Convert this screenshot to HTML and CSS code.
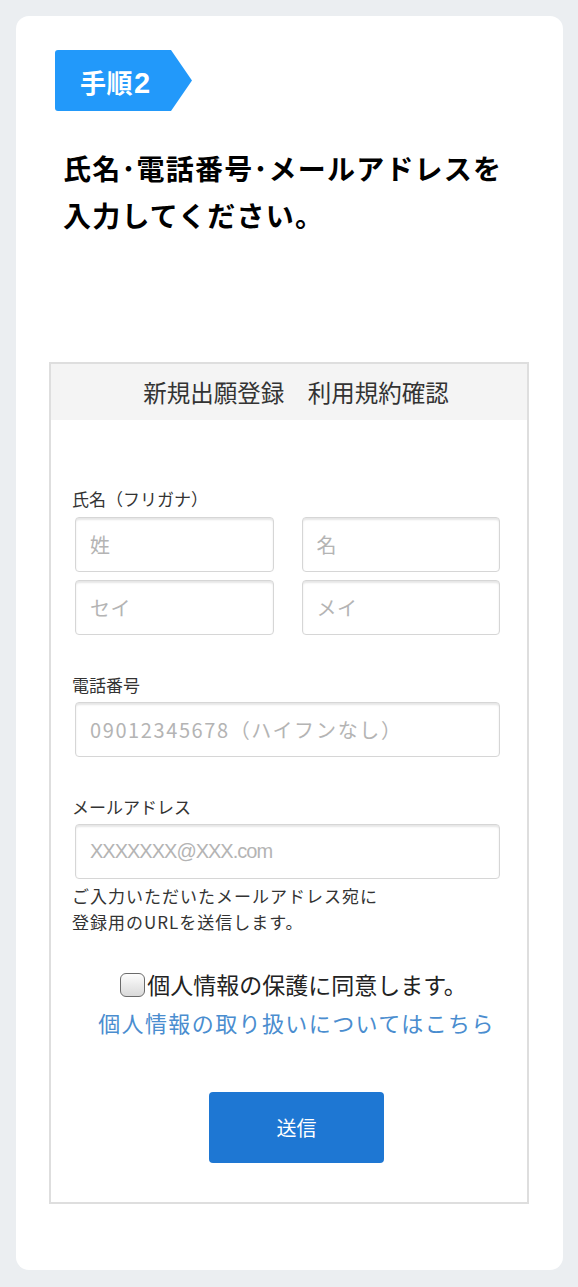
FILE: index.html
```html
<!DOCTYPE html>
<html lang="ja">
<head>
<meta charset="utf-8">
<title>手順2</title>
<link rel="stylesheet" href="styles.css">
</head>
<body>
<div class="card">
  <div class="step-badge"><span class="step-label">手順<span class="step-num">2</span></span></div>
  <h1 class="step-title">氏名･電話番号･メールアドレスを<br>入力してください。</h1>

  <div class="form-box">
    <div class="form-header">新規出願登録　利用規約確認</div>
    <div class="form-body">
      <div class="field-label first">氏名（フリガナ）</div>
      <div class="name-grid">
        <input class="text-input" type="text" placeholder="姓">
        <input class="text-input" type="text" placeholder="名">
        <input class="text-input" type="text" placeholder="セイ">
        <input class="text-input" type="text" placeholder="メイ">
      </div>

      <div class="field-label">電話番号</div>
      <div class="single-row">
        <input class="text-input tel" type="text" placeholder="09012345678（ハイフンなし）">
      </div>

      <div class="field-label">メールアドレス</div>
      <div class="single-row">
        <input class="text-input latin" type="text" placeholder="XXXXXXX@XXX.com">
      </div>
      <p class="field-note">ご入力いただいたメールアドレス宛に<br>登録用のURLを送信します。</p>

      <div class="agree">
        <label class="agree-line"><input class="agree-check" type="checkbox">個人情報の保護に同意します。</label>
        <a class="agree-link" href="#">個人情報の取り扱いについてはこちら</a>
        <button class="submit-btn" type="button">送信</button>
      </div>
    </div>
  </div>
</div>
</body>
</html>
```

FILE: styles.css
```css
html, body {
  margin: 0;
  padding: 0;
}

body {
  background: #ebeef1;
  font-family: "Noto Sans CJK JP", sans-serif;
  color: #333;
  padding: 16px 15px 16px 16px;
}

.card {
  background: #fff;
  border-radius: 13px;
  padding: 34px 34px 66px 33px;
  display: flex;
  flex-direction: column;
}

.step-badge {
  margin-left: 6px;
  width: 137px;
  height: 61px;
  background: #2299fa;
  clip-path: polygon(0 0, 116px 0, 137px 50%, 116px 100%, 0 100%);
  border-radius: 3px 0 0 3px;
  display: flex;
  align-items: center;
}

.step-label {
  color: #fff;
  font-weight: 700;
  font-size: 26px;
  line-height: 1;
  padding-left: 25px;
  padding-top: 6px;
  letter-spacing: 0.5px;
}

.step-num {
  font-family: "Liberation Sans", "Noto Sans CJK JP", sans-serif;
  font-size: 29px;
  margin-left: 1px;
}

.step-title {
  margin: 34px 0 0 14px;
  font-size: 28px;
  line-height: 47px;
  letter-spacing: 1.2px;
  font-weight: 700;
  color: #000;
}

.form-box {
  margin-top: 123px;
  border: 2px solid #dedede;
  display: flex;
  flex-direction: column;
}

.form-header {
  height: 56px;
  background: #f4f4f4;
  display: flex;
  align-items: center;
  justify-content: center;
  padding-left: 14px;
  font-size: 23.5px;
  color: #333;
}

.form-body {
  padding: 67px 24px 39px 21px;
  display: flex;
  flex-direction: column;
}

.field-label {
  font-size: 17px;
  line-height: 24px;
  color: #333;
  margin-top: 38px;
}

.field-label.first {
  margin-top: 0;
}

.name-grid {
  margin-top: 6px;
  padding: 0 3px;
  display: grid;
  grid-template-columns: 1fr 1fr;
  column-gap: 28px;
  row-gap: 8px;
}

.single-row {
  margin-top: 5px;
  padding: 0 3px;
  display: flex;
}

.text-input {
  box-sizing: border-box;
  width: 100%;
  height: 55px;
  margin: 0;
  border: 1px solid #d6d6d6;
  border-radius: 4px;
  box-shadow: inset 0 2px 2px rgba(0, 0, 0, 0.10);
  background: #fff;
  padding: 0 14px;
  font-family: "Noto Sans CJK JP", sans-serif;
  font-size: 20px;
  color: #333;
  outline: none;
}

.text-input::placeholder {
  color: #b4b4b4;
  letter-spacing: 0.4px;
}

.text-input.tel::placeholder {
  letter-spacing: 1.6px;
}

.text-input.latin {
  font-family: "Liberation Sans", "Noto Sans CJK JP", sans-serif;
  font-size: 20px;
}

.text-input.latin::placeholder {
  letter-spacing: -1px;
}

.field-note {
  margin: 4px 0 0;
  font-size: 17px;
  line-height: 26px;
  letter-spacing: 1px;
  color: #333;
}

.agree {
  margin-top: 30px;
  padding-left: 18px;
  display: flex;
  flex-direction: column;
  align-items: center;
}

.agree-line {
  display: flex;
  align-items: center;
  font-size: 23px;
  line-height: 38px;
  color: #222;
  margin-left: -6px;
}

.agree-check {
  appearance: none;
  -webkit-appearance: none;
  width: 25px;
  height: 24px;
  margin: 2px 2px 0 0;
  border: 1.5px solid #6b6b6b;
  border-radius: 6px;
  background: linear-gradient(#fdfdfd, #d9d9d9);
  box-sizing: border-box;
}

.agree-link {
  font-size: 22px;
  line-height: 38px;
  letter-spacing: 1.4px;
  color: #4a8dcf;
  text-decoration: none;
}

.submit-btn {
  margin-top: 51px;
  width: 175px;
  height: 71px;
  border: none;
  border-radius: 4px;
  background: #1e77d3;
  color: #fff;
  font-family: "Noto Sans CJK JP", sans-serif;
  font-size: 20px;
}
```
